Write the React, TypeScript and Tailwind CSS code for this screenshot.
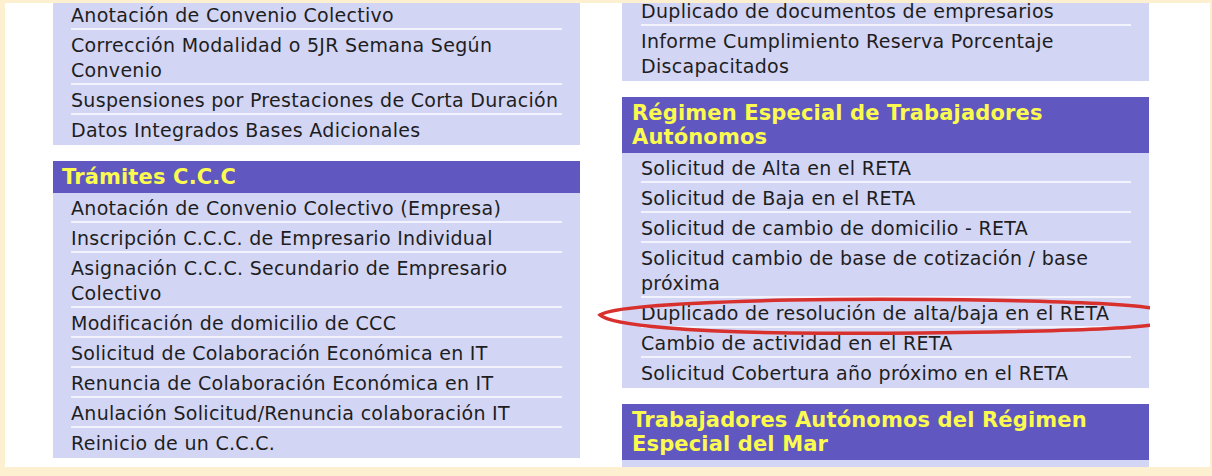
import React from "react";

type Row = string[];
type Panel = { header?: string[]; rows: Row[] };

const left: Panel[] = [
  {
    rows: [
      ["Anotación de Convenio Colectivo"],
      ["Corrección Modalidad o 5JR Semana Según", "Convenio"],
      ["Suspensiones por Prestaciones de Corta Duración"],
      ["Datos Integrados Bases Adicionales"],
    ],
  },
  {
    header: ["Trámites C.C.C"],
    rows: [
      ["Anotación de Convenio Colectivo (Empresa)"],
      ["Inscripción C.C.C. de Empresario Individual"],
      ["Asignación C.C.C. Secundario de Empresario", "Colectivo"],
      ["Modificación de domicilio de CCC"],
      ["Solicitud de Colaboración Económica en IT"],
      ["Renuncia de Colaboración Económica en IT"],
      ["Anulación Solicitud/Renuncia colaboración IT"],
      ["Reinicio de un C.C.C."],
    ],
  },
];

const right: Panel[] = [
  {
    rows: [
      ["Duplicado de documentos de empresarios"],
      ["Informe Cumplimiento Reserva Porcentaje", "Discapacitados"],
    ],
  },
  {
    header: ["Régimen Especial de Trabajadores", "Autónomos"],
    rows: [
      ["Solicitud de Alta en el RETA"],
      ["Solicitud de Baja en el RETA"],
      ["Solicitud de cambio de domicilio - RETA"],
      ["Solicitud cambio de base de cotización / base", "próxima"],
      ["Duplicado de resolución de alta/baja en el RETA"],
      ["Cambio de actividad en el RETA"],
      ["Solicitud Cobertura año próximo en el RETA"],
    ],
  },
  {
    header: ["Trabajadores Autónomos del Régimen", "Especial del Mar"],
    rows: [["Solicitud de Alta en el REM"], ["Solicitud de Baja en el REM"]],
  },
];

function PanelBox({ p, side }: { p: Panel; side: "l" | "r" }) {
  return (
    <div className="w-[527px] bg-[#d3d5f5] mb-[16px]">
      {p.header && (
        <div
          className={
            "bg-[#6157c0] text-[#fbfb4f] font-bold text-[21px] leading-[24px] tracking-[0.15px] py-[4px] whitespace-nowrap " +
            (side === "l" ? "pl-[9px]" : "pl-[10px]")
          }
        >
          {p.header.map((h, i) => (
            <div key={i}>{h}</div>
          ))}
        </div>
      )}
      {p.rows.map((r, i) => (
        <div
          key={i}
          className={
            "pt-[3px] border-b-2 text-[#1e1e1e] text-[19px] leading-[25px] tracking-[0.3px] whitespace-nowrap " +
            (side === "l" ? "ml-[18px] mr-[18px] " : "ml-[19px] mr-[18px] ") +
            (i === p.rows.length - 1 ? "border-transparent" : "border-[#f3f3fd]")
          }
        >
          {r.map((t, j) => (
            <div key={j}>{t}</div>
          ))}
        </div>
      ))}
    </div>
  );
}

export default function App() {
  return (
    <div
      className="relative w-[1212px] h-[476px] bg-[#fdf0d0] pt-[3px] pl-[5px] pr-[2px] pb-[9px]"
      style={{ fontFamily: '"DejaVu Sans", Verdana, sans-serif' }}
    >
      <div className="bg-white w-full h-full overflow-hidden flex items-start pl-[48px] gap-[42px]">
        <div className="-mt-[3px] flex flex-col">
          {left.map((p, i) => (
            <PanelBox key={i} p={p} side="l" />
          ))}
        </div>
        <div className="-mt-[7px] flex flex-col">
          {right.map((p, i) => (
            <PanelBox key={i} p={p} side="r" />
          ))}
        </div>
      </div>
      <svg
        className="absolute left-0 top-0 pointer-events-none"
        width="1150"
        height="476"
        viewBox="0 0 1150 476"
      >
        <path
          d="M1152 308 C 1100 300, 900 298, 790 300 C 700 302, 612 306, 600 315 C 612 326, 700 332, 790 333 C 900 334, 1100 332, 1152 325"
          fill="none"
          stroke="#d8302c"
          strokeWidth="3.5"
        />
      </svg>
    </div>
  );
}
